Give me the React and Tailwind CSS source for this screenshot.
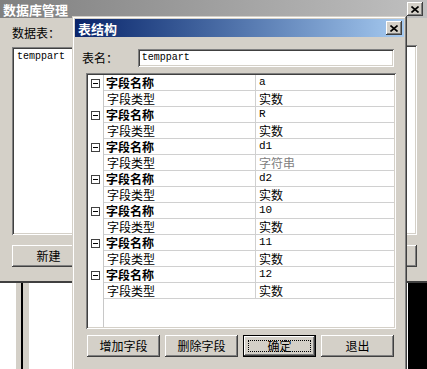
import React from 'react';

const raised = "shadow-[inset_-1px_-1px_0_#404040,inset_1px_1px_0_#ffffff,inset_-2px_-2px_0_#808080,inset_2px_2px_0_#d4d0c8]";
const sunken = "shadow-[inset_1px_1px_0_#808080,inset_-1px_-1px_0_#ffffff,inset_2px_2px_0_#404040,inset_-2px_-2px_0_#d4d0c8]";

const CloseBtn = () => (
    <div className={`w-[16px] h-[14px] bg-[#d4d0c8] flex items-center justify-center ${raised}`}>
        <svg width="8" height="7" viewBox="0 0 8 7">
            <path d="M0.5 0.5 L7.5 6.5 M7.5 0.5 L0.5 6.5" stroke="#000" strokeWidth="1.6" />
        </svg>
    </div>
);

const Button = ({ children, isDefault, className = "" }) => (
    <div className={`h-[22px] bg-[#d4d0c8] flex items-center justify-center text-[12px] text-black ${isDefault ? "border border-black" : ""} ${raised} ${className}`}>
        {isDefault ? (
            <div className="w-[calc(100%-8px)] h-[calc(100%-8px)] border border-dotted border-black flex items-center justify-center">{children}</div>
        ) : children}
    </div>
);

const Minus = () => (
    <div className="w-[9px] h-[9px] border border-[#404040] bg-white flex items-center justify-center">
        <div className="w-[5px] h-px bg-black" />
    </div>
);

const fields = [
    ['a', '实数'],
    ['R', '实数'],
    ['d1', '字符串', true],
    ['d2', '实数'],
    ['10', '实数'],
    ['11', '实数'],
    ['12', '实数'],
];

const App = () => (
    <div className="relative w-[427px] h-[369px] overflow-hidden bg-white font-['Noto_Sans_CJK_SC','Liberation_Sans',sans-serif] text-black select-none">
        {/* background window */}
        <div className="h-[283px] bg-[#d4d0c8] flex flex-col border-b-2 border-[#404040]">
            <div className="h-[18px] bg-gradient-to-r from-[#808080] to-[#c0c0c0] flex items-center justify-between pl-[3px] pr-[4px]">
                <span className="text-white font-bold text-[13px] leading-none">数据库管理</span>
                <CloseBtn />
            </div>
            <div className="flex justify-between">
                <div className="pl-[12px] w-[140px] flex flex-col">
                    <div className="mt-[8px] h-[14px] text-[12px] leading-[14px]">数据表：</div>
                    <div className={`mt-[7px] h-[188px] w-[73px] bg-white p-[3px] ${sunken}`}>
                        <div className="font-['Liberation_Mono',monospace] text-[10px] leading-[14px] pl-[2px]">temppart</div>
                    </div>
                    <Button className="mt-[10px] w-[73px]">新建</Button>
                </div>
                <div className="pr-[10px] w-[100px] flex flex-col">
                    <div className={`mt-[27px] h-[190px] bg-white ${sunken}`} />
                    <Button className="mt-[10px]"> </Button>
                </div>
            </div>
        </div>
        {/* window behind, lower part */}
        <div className="h-[86px] flex">
            <div className="w-[16px] bg-white" />
            <div className="w-[5px] bg-[#d4d0c8]" />
            <div className="w-[2px] bg-black" />
            <div className="w-[6px] bg-[#d4d0c8]" />
            <div className="flex-1 bg-white" />
            <div className="w-[19px] bg-black" />
        </div>

        {/* dialog */}
        <div className="absolute left-[72px] top-[16px] w-[335px] h-[360px] bg-[#d4d0c8] p-[3px] shadow-[inset_-1px_-1px_0_#404040,inset_1px_1px_0_#d4d0c8,inset_-2px_-2px_0_#808080,inset_2px_2px_0_#ffffff]">
            <div className="h-[18px] bg-gradient-to-r from-[#0a246a] to-[#a6caf0] flex items-center justify-between pl-[3px] pr-[2px]">
                <span className="text-white font-bold text-[13px] leading-none">表结构</span>
                <CloseBtn />
            </div>
            <div className="flex flex-col pl-[11px] pr-[10px]">
                <div className="mt-[12px] flex items-center h-[18px]">
                    <span className="w-[52px] pl-[-4px] -ml-[4px] text-[12px] leading-none">表名：</span>
                    <div className={`ml-[4px] w-[257px] h-[18px] bg-white flex items-center pl-[4px] ${sunken}`}>
                        <span className="font-['Liberation_Mono',monospace] text-[10px] leading-none">temppart</span>
                    </div>
                </div>
                <div className={`mt-[6px] w-[310px] h-[256px] bg-white p-[2px] ${sunken}`}>
                    <div className="flex h-full">
                        <div className="w-[16px] border-r border-[#c8c8c8] flex flex-col">
                            {fields.map((f) => (
                                <div key={f[0]} className="h-[32px]">
                                    <div className="h-[16px] flex items-center pl-[3px]">
                                        <Minus />
                                    </div>
                                </div>
                            ))}
                        </div>
                        <div className="flex-1 flex flex-col text-[12px]">
                            {fields.map(([name, type, grey]) => (
                                <React.Fragment key={name}>
                                    <div className="h-[16px] flex border-b border-[#d0d0d0]">
                                        <div className="w-[152px] border-r border-[#d0d0d0] pl-[2px] font-bold leading-[15px]">字段名称</div>
                                        <div className="flex-1 pl-[3px] font-['Liberation_Mono',monospace] text-[11px] leading-[15px]">{name}</div>
                                    </div>
                                    <div className="h-[16px] flex border-b border-[#d0d0d0]">
                                        <div className="w-[152px] border-r border-[#d0d0d0] pl-[3px] leading-[15px]">字段类型</div>
                                        <div className={`flex-1 pl-[3px] leading-[15px] ${grey ? "text-[#808080]" : ""}`}>{type}</div>
                                    </div>
                                </React.Fragment>
                            ))}
                        </div>
                    </div>
                </div>
                <div className="mt-[6px] flex gap-[5px] pl-[1px]">
                    <Button className="w-[73px]">增加字段</Button>
                    <Button className="w-[73px]">删除字段</Button>
                    <Button className="w-[73px]" isDefault>确定</Button>
                    <Button className="w-[73px]">退出</Button>
                </div>
            </div>
        </div>
    </div>
);

export default App;
